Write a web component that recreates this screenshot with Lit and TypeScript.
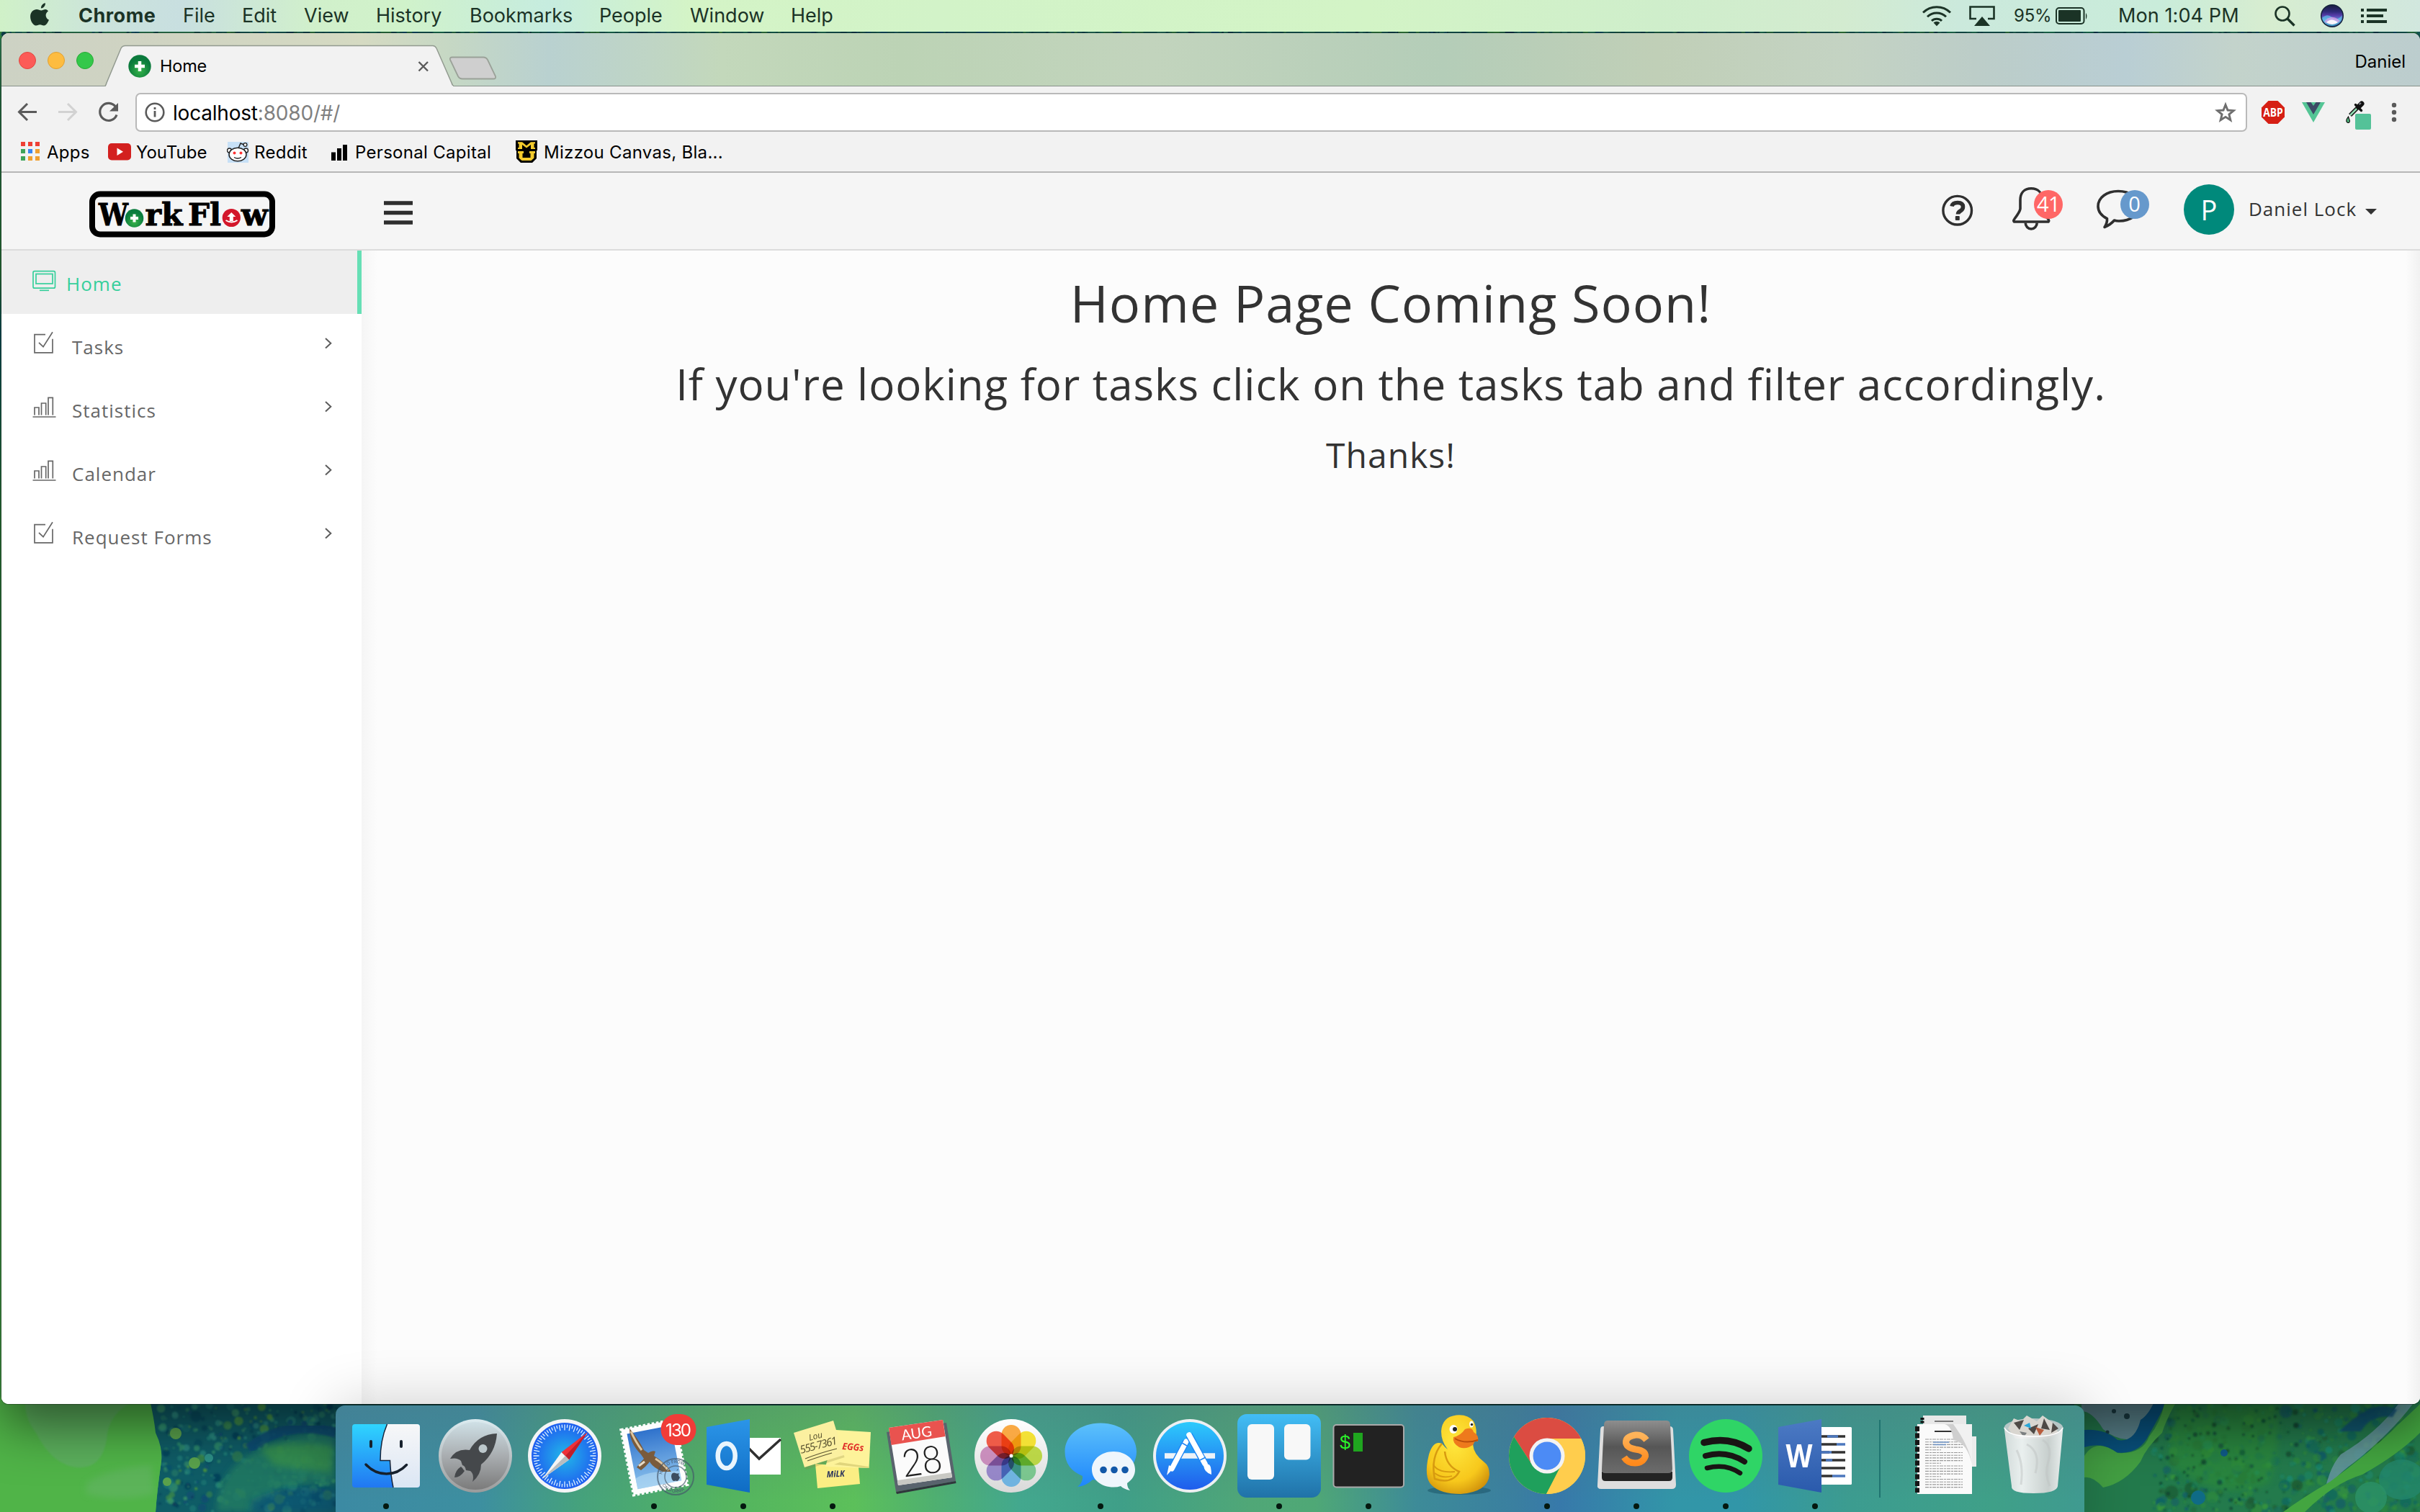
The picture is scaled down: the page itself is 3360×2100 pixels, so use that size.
import { LitElement, html, css, svg } from "lit";
import { customElement, property } from "lit/decorators.js";
import { classMap } from "lit/directives/class-map.js";

/* ---------- Wallpaper ---------- */

interface Blob { x: number; y: number; r: number; c: string; o: number; }

function scatter(seed: number, count: number, x0: number, x1: number, y0: number, y1: number, rMin: number, rMax: number, colors: string[]): Blob[] {
  let s = seed;
  const rnd = () => { s = (s * 16807) % 2147483647; return s / 2147483647; };
  return Array.from({ length: count }, () => ({
    x: x0 + rnd() * (x1 - x0),
    y: y0 + rnd() * (y1 - y0),
    r: rMin + rnd() * rnd() * (rMax - rMin),
    c: colors[Math.floor(rnd() * colors.length)],
    o: 0.35 + rnd() * 0.5,
  }));
}

const leftBubbles = scatter(7, 420, 222, 468, 1950, 2100, 1.5, 8, ["#2f8f6b", "#1f7f78", "#4f9a3c", "#0d4a72", "#2a8a80", "#083c58", "#3a9468"]);
const rightBubbles = scatter(31, 520, 2990, 3360, 1950, 2100, 1.5, 10, ["#1f7a4a", "#2f8a3c", "#146a60", "#3a9a3a", "#0d5a6a", "#1a8a70", "#1c5c34"]);
const darkSpecks = scatter(57, 90, 3000, 3200, 1955, 2100, 1.5, 5, ["#0d4a3c", "#0a4030", "#124a2c"]);
const topFlecks = scatter(91, 400, 0, 3360, 43, 48, 2, 9, ["#0d4a72", "#1f7f58", "#3b8a3c", "#06304a", "#2a7a60"]);

@customElement("desktop-wallpaper")
export class DesktopWallpaper extends LitElement {
  static styles = css`
    :host { display: block; width: 3360px; height: 2100px; }
    .wall { display: block; }
  `;
  render() {
    const dot = (b: Blob) => svg`<circle cx=${b.x} cy=${b.y} r=${b.r} fill=${b.c} opacity=${b.o}></circle>`;
    return html`
      <svg class="wall" width="3360" height="2100" viewBox="0 0 3360 2100">
        <defs>
          <linearGradient id="edge" x1="0" y1="0" x2="0" y2="1">
            <stop offset="0" stop-color="#2f7f58"></stop><stop offset=".18" stop-color="#2e8040"></stop>
            <stop offset=".22" stop-color="#0d5860"></stop><stop offset=".34" stop-color="#2f8040"></stop>
            <stop offset=".7" stop-color="#3f9a48"></stop><stop offset="1" stop-color="#4fb050"></stop>
          </linearGradient>
          <filter id="soft"><feGaussianBlur stdDeviation="5"></feGaussianBlur></filter>
          <filter id="soft1"><feGaussianBlur stdDeviation="1"></feGaussianBlur></filter>
        </defs>
        <rect width="3360" height="2100" fill="#155a55"></rect>
        <rect width="300" height="2100" fill="url(#edge)"></rect>
        ${topFlecks.map(dot)}
        <path d="M207 1940H480V2100H216Q218 2070 224 2030Q226 2010 214 1990Z" fill="#0f5c66"></path>
        <g filter="url(#soft1)">${leftBubbles.map(dot)}</g>
        <path d="M0 1940H207Q214 1970 216 1990Q226 2010 224 2030Q218 2070 216 2100H0Z" fill="#50b448"></path>
        <path d="M35 1945H190Q150 1960 148 2000Q140 2045 100 2037Q70 2030 50 1990Q34 1970 35 1945Z" fill="#5fae64" opacity=".75" filter="url(#soft1)"></path>
        <path d="M120 2060q30-20 90-25l4 40q-50 12-94 0Z" fill="#68b46a" opacity=".5" filter="url(#soft)"></path>
        <path d="M300 2100Q305 2030 370 2010Q420 1985 466 1990V2060Q380 2055 350 2100Z" fill="#227a62" opacity=".85" filter="url(#soft)"></path>
        <path d="M345 2012Q400 1970 466 1990" stroke="#0b4a74" stroke-width="14" fill="none" opacity=".8" filter="url(#soft1)"></path>
        <path d="M360 2010Q410 2000 462 2008L460 2045Q410 2040 380 2035Z" fill="#3f9a44" opacity=".6" filter="url(#soft)"></path>
        <path d="M350 2082Q400 2058 466 2070V2100H345Z" fill="#0d5478" opacity=".6" filter="url(#soft)"></path>
        <circle cx="244" cy="1991" r="8" fill="#5aa24c"></circle><circle cx="270" cy="2032" r="8" fill="#5aa24c"></circle>
        <circle cx="290" cy="2025" r="6" fill="#2d8f86"></circle><circle cx="232" cy="2058" r="6" fill="#5aa24c"></circle>

        <rect x="2880" y="1940" width="480" height="160" fill="#237a4c"></rect>
        <g filter="url(#soft1)">${rightBubbles.map(dot)}</g>
        <path d="M3020 1950H3160Q3170 2010 3150 2060Q3080 2090 3010 2030Z" fill="#2f8c38" opacity=".6" filter="url(#soft)"></path>
        <g filter="url(#soft1)">${darkSpecks.map(dot)}</g>
        <path d="M2890 1940H3010Q2990 1960 2978 1990Q2950 2010 2920 1985Q2905 1960 2890 1960Z" fill="#5a838c"></path>
        <circle cx="2935" cy="1960" r="3" fill="#1a3c44"></circle><circle cx="2953" cy="1967" r="4" fill="#1a3c44"></circle><circle cx="2926" cy="1989" r="2.500" fill="#1a3c44"></circle>
        <path d="M2994 1940Q2984 1965 2972 1972Q2964 2004 2940 2000Q2922 1984 2894 1986V2010Q2920 2002 2936 2017Q2970 2022 2984 1992Q3000 1965 3008 1945Z" fill="#08507c"></path>
        <path d="M3005 1950H3020Q3006 1975 3002 1990Q2980 2010 2972 2030Q2950 2060 2920 2066Q2906 2050 2894 2052V2022Q2910 1996 2940 2018Q2975 2020 2984 1995Q3000 1975 3005 1950Z" fill="#43a043"></path>
        <path d="M3225 2085Q3228 2060 3270 2030Q3320 1990 3350 1950H3330Q3300 1990 3250 2020Q3232 2040 3225 2085Z" fill="#6c98a4" opacity=".8"></path>
        <path d="M3170 2100Q3200 2078 3235 2058Q3300 2010 3330 1978Q3350 1960 3360 1950V1990Q3330 2020 3280 2048Q3240 2060 3200 2100Z" fill="#43a540"></path>
        <ellipse cx="3335" cy="2055" rx="32" ry="28" fill="#23876c" opacity=".8"></ellipse>
        <ellipse cx="3292" cy="2080" rx="22" ry="22" fill="#2c9268" opacity=".8"></ellipse>
        <path d="M3248 1988q20-20 40-30t40 0l-6 10q-30-4-44 20z" fill="#0a5078" opacity=".8" filter="url(#soft1)"></path>
        <circle cx="3052" cy="2080" r="10" fill="#0f6b86"></circle><circle cx="3088" cy="2018" r="5" fill="#0f5a86"></circle>
      </svg>`;
  }
}

/* ---------- macOS menu bar ---------- */

@customElement("mac-menu-bar")
export class MacMenuBar extends LitElement {
  static styles = css`
    :host { display: block; font-family: Inter, "Liberation Sans", sans-serif; }
    .bar {
      display: flex; align-items: center; height: 44px; box-sizing: border-box;
      background: linear-gradient(90deg, #d0f1c8 0, #cbe3dc 150px, #c8dfe0 250px, #d1f0cb 440px, #d0f2ca 560px, #c6ecdf 760px, #d4f4c6 960px, #d2f3c8 1300px, #d3f4c6 1900px, #cfeecb 2300px, #d3ebd0 2560px, #cbe9dc 2720px, #c9ecda 3000px, #d7edd0 3150px, #d1e7de 3360px);
      color: #1b3326; font-size: 27px; line-height: 44px;
    }
    .apple { margin-left: 41px; width: 68px; height: 44px; }
    .item { white-space: nowrap; letter-spacing: 0; }
    .app { font-weight: 700; letter-spacing: 0.5px; }
    .spacer { flex: 1; }
    .pct { font-size: 24px; width: 57px; letter-spacing: -0.2px; }
    .clock { width: 217px; letter-spacing: 0.1px; }
    .icon { display: block; flex: none; }
  `;
  private items: [string, number][] = [["File", 82], ["Edit", 86], ["View", 100], ["History", 130], ["Bookmarks", 180], ["People", 126], ["Window", 140], ["Help", 90]];
  render() {
    return html`<div class="bar">
      <svg class="apple" viewBox="43.500 0 68 44"><path fill="#1b3326" d="M59.500 11.500c-.3-3.500 2.600-7 5.900-7.300.4 3.800-2.800 7.200-5.900 7.300zM66 13c-3 0-4.200 1.400-6.200 1.400S56 13 53.400 13c-4.200 0-8.800 3.600-8.800 10.200 0 6.200 4.300 12.400 7.800 12.400 2 0 3-1.300 5.600-1.300s3.300 1.300 5.500 1.300c3.100 0 6-5 6.900-8-3-1.200-4.300-4-4.300-6.300 0-2.700 1.500-4.700 3.400-5.900C68 13.800 66.700 13 66 13z"/></svg>
      <span class="item app" style="width:145px">Chrome</span>
      ${this.items.map(([label, w]) => html`<span class="item" style="width:${w}px">${label}</span>`)}
      <span class="spacer"></span>
      <svg class="icon" width="127" height="44" viewBox="2669 0 127 44" fill="none" stroke="#1b3326" stroke-width="3">
        <path d="M2670 17.500a27 27 0 0 1 38 0M2676 23.300a18.500 18.500 0 0 1 26 0M2682 29a10 10 0 0 1 14 0"/>
        <path d="M2684.500 31.500a6.400 6.400 0 0 1 9 0l-4.500 4.800z" fill="#1b3326" stroke="none"/>
        <path d="M2744 26h-8.500V9.500h33V26h-8.500" stroke-width="2.600"/><path d="M2752 23l11 13h-22z" fill="#1b3326" stroke="none"/>
      </svg>
      <span class="item pct">95%</span>
      <svg class="icon" width="88" height="44" viewBox="2853 0 88 44"><rect x="2855" y="11" width="38.500" height="22" rx="4" fill="none" stroke="#1b3326" stroke-width="2"/><rect x="2858" y="14" width="31" height="16" rx="1" fill="#1b3326"/><path d="M2896 18q3 4 0 9z" fill="#1b3326"/></svg>
      <span class="item clock">Mon 1:04 PM</span>
      <svg class="icon" width="202" height="44" viewBox="3158 0 202 44">
        <defs>
          <linearGradient id="siri" x2="0" y2="1"><stop offset="0" stop-color="#1b1c44"/><stop offset=".3" stop-color="#2e2a78"/><stop offset=".5" stop-color="#5a3fae"/><stop offset=".7" stop-color="#5f8fd8"/><stop offset="1" stop-color="#2a4f8a"/></linearGradient>
        </defs>
        <circle cx="3169" cy="19" r="9.500" fill="none" stroke="#1b3326" stroke-width="2.600"/><path d="M3176 26l9.500 9.500" stroke="#1b3326" stroke-width="3.400"/>
        <circle cx="3238" cy="22" r="16" fill="#12213a"/><circle cx="3238" cy="22" r="14.500" fill="url(#siri)"/>
        <path d="M3224 25q7-7 14-1t14-3q-1 13-14 15-12-1-14-11z" fill="#5fe0f4" opacity=".55"/><path d="M3227 30q10-12 22-1-10 9-22 1z" fill="#ff9be8" opacity=".6"/><path d="M3230 31q7-7 16 0-8 6-16 0z" fill="#fff" opacity=".9"/>
        <path d="M3278 14h4M3286 14h28M3278 22h4M3286 22h23M3278 30h4M3286 30h28" stroke="#1b3326" stroke-width="4"/>
      </svg>
    </div>`;
  }
}

/* ---------- Browser chrome ---------- */

@customElement("browser-chrome")
export class BrowserChrome extends LitElement {
  static styles = css`
    :host { display: block; font-family: Inter, "Liberation Sans", sans-serif; color: #000; }
    .tabs {
      display: flex; height: 74px; position: relative;
      box-shadow: inset 0 -1px #87918a;
      background: linear-gradient(90deg, #cdd2c4 0, #d0d4c2 250px, #d5dac2 500px, #c6d8c4 620px, #b9d1d0 760px, #bfd5c5 900px, #c3d8bb 1000px, #bcd3b5 1250px, #c2d4bd 1600px, #b4cdb8 2000px, #c0cfb7 2300px, #c4d3c3 2560px, #bccdc8 2740px, #b9ced4 2950px, #c3d3cb 3100px, #bccdce 3358px);
    }
    .strip { display: block; flex: none; }
    .title { position: absolute; left: 220px; top: 30px; font-size: 23.5px; line-height: 32px; letter-spacing: -0.2px; }
    .profile { margin: 24px 20px 0 auto; font-size: 24px; line-height: 32px; letter-spacing: 0; }
    .tools { display: flex; align-items: center; height: 72px; background: #f2f2f2; }
    .nav { display: block; width: 186px; flex: none; }
    .omni { display: flex; align-items: center; box-sizing: border-box; width: 2932px; height: 54px; border: 2px solid #b9b9b9; border-radius: 7px; background: #fff; padding-left: 11px; font-size: 28px; }
    .url { margin: 2px 0 0 11px; letter-spacing: -0.2px; }
    .port { color: #808080; }
    .star { margin-left: auto; margin-right: 13px; }
    .marks { display: flex; align-items: center; height: 46px; background: #f2f2f2; border-bottom: 2px solid #b6b6b6; font-size: 24px; line-height: 30px; letter-spacing: 0.3px; }
    .mark { white-space: nowrap; margin-bottom: 6px; margin-left: -2px; margin-right: 2px; }
    svg { display: block; flex: none; }
  `;
  render() {
    const grid = ["#ee4035", "#ee4035", "#ee4035", "#3fa35a", "#3a86f0", "#f0a030", "#3fa35a", "#f0a030", "#f0a030"];
    return html`
      <div class="tabs">
        <svg class="strip" width="720" height="74" viewBox="2 46 720 74">
          <defs><radialGradient id="fav" cy=".7"><stop offset="0" stop-color="#35b44a"/><stop offset="1" stop-color="#0b7a3c"/></radialGradient></defs>
          <path d="M145 120.500Q147 119 148 115L168 67Q170 63.500 174 63.500H601Q604 63.500 606 67L627 115Q628 119 631 120.500Z" fill="#f2f2f2" stroke="#929a90" stroke-width="1.500"/>
          <path d="M147 120H629" stroke="#f2f2f2" stroke-width="2"/>
          <path d="M628 79.500H671Q675 79.500 677 83L688 106Q689 109.500 685 109.500H642Q638 109.500 636 106L625 83Q624 79.500 628 79.500Z" fill="#cfcfcf" stroke="#9aa198" stroke-width="1.800"/>
          <circle cx="38" cy="84" r="11.500" fill="#fc5b57" stroke="#e2463f"/><circle cx="78" cy="84" r="11.500" fill="#fdbc40" stroke="#e0a033"/><circle cx="118" cy="84" r="11.500" fill="#34c84a" stroke="#27aa35"/>
          <circle cx="194" cy="92" r="15.700" fill="url(#fav)"/><path d="M194 85v14M187 92h14" stroke="#fff" stroke-width="4.500"/>
          <path d="M581.500 86l12.500 12.500M594 86l-12.500 12.500" stroke="#5a5a5a" stroke-width="2.400"/>
        </svg>
        <span class="title">Home</span>
        <span class="profile">Daniel</span>
      </div>
      <div class="tools">
        <svg class="nav" width="186" height="72" viewBox="2 120 186 72" fill="none" stroke-width="3">
          <path d="M51 155.500H27M38 144L26.500 155.500 38 167" stroke="#5a5a5a"/>
          <path d="M81 155.500h24M94 144l11.500 11.500L94 167" stroke="#d2d2d2"/>
          <path d="M160.500 148.500a12 12 0 1 0 1.500 11" stroke="#5a5a5a" stroke-width="3.200"/><path d="M164 143v11.500h-12z" fill="#5a5a5a"/>
        </svg>
        <div class="omni">
          <svg width="28" height="28" viewBox="0 0 28 28"><circle cx="14" cy="14" r="12.300" fill="none" stroke="#5a5a5a" stroke-width="2.600"/><path d="M14 12v8.500M14 7v3" stroke="#5a5a5a" stroke-width="2.800"/></svg>
          <span class="url">localhost<span class="port">:8080/#/</span></span>
          <svg class="star" width="30" height="30" viewBox="0 0 30 30"><path d="M15 4.500l3 7.500 8.200.6-6.300 5.200 2 8-6.900-4.400-6.900 4.400 2-8-6.300-5.200 8.200-.6z" fill="none" stroke="#6e6e6e" stroke-width="2.900"/></svg>
        </div>
        <svg width="230" height="72" viewBox="3120 120 230 72">
          <path d="M3149.500 140h13l9.500 9.500v13l-9.500 9.500h-13l-9.500-9.500v-13z" fill="#d61f14"/>
          <text x="3156" y="161.500" text-anchor="middle" font-family="'Open Sans',sans-serif" font-weight="700" font-size="16" textLength="27.500" lengthAdjust="spacingAndGlyphs" fill="#fff">ABP</text>
          <path d="M3196 142h32l-16 28z" fill="#54c595"/><path d="M3202 142h6.500l3.500 5 3.500-5h6.500l-10 17z" fill="#3d4a66"/>
          <path d="M3263 160l13-13" stroke="#111" stroke-width="5.500"/><path d="M3263 160l9-9" stroke="#8fdcb0" stroke-width="2.500"/><path d="M3270.500 145.500l8 8" stroke="#111" stroke-width="3.400" stroke-linecap="round"/><path d="M3275.500 147.500l3.500-3.500" stroke="#111" stroke-width="7" stroke-linecap="round"/><path d="M3275.500 145l2.500-2" stroke="#8b8b95" stroke-width="2"/>
          <path d="M3260.500 162q-4.500 6-1.500 8 3 1.500 3.500-2z" fill="#4fb57c" stroke="#111" stroke-width="1.200"/>
          <rect x="3270" y="158" width="22" height="22" rx="2" fill="#54c298"/>
          <circle cx="3324" cy="146" r="3.200" fill="#5a5a5a"/><circle cx="3324" cy="156" r="3.200" fill="#5a5a5a"/><circle cx="3324" cy="166" r="3.200" fill="#5a5a5a"/>
        </svg>
      </div>
      <div class="marks">
        <svg width="65" height="46" viewBox="2 192 65 46">${grid.map((c, i) => svg`<rect x=${29 + (i % 3) * 10} y=${197 + Math.floor(i / 3) * 10} width="6" height="6" fill=${c}></rect>`)}</svg>
        <span class="mark" style="width:83px">Apps</span>
        <svg width="41" height="46" viewBox="150 192 41 46"><rect x="150" y="199" width="32" height="23.500" rx="5" fill="#d3201f"/><path d="M162.500 205.500v10.500l8.500-5.200z" fill="#fff"/></svg>
        <span class="mark" style="width:124px;letter-spacing:0">YouTube</span>
        <svg width="40" height="46" viewBox="315 192 40 46"><rect x="316" y="197" width="29" height="29" fill="#c7e0f6"/>
          <path d="M331 206l3-7 5 2" fill="none" stroke="#222" stroke-width="1.500"/><circle cx="340.500" cy="201" r="2.400" fill="#fff" stroke="#222" stroke-width="1.300"/>
          <circle cx="318.500" cy="209" r="3" fill="#fff" stroke="#222" stroke-width="1.400"/><circle cx="341.500" cy="209" r="3" fill="#fff" stroke="#222" stroke-width="1.400"/>
          <ellipse cx="330" cy="214.500" rx="12" ry="9.300" fill="#fff" stroke="#222" stroke-width="1.500"/><circle cx="325.500" cy="212.500" r="2" fill="#f33"/><circle cx="334.500" cy="212.500" r="2" fill="#f33"/><path d="M325 218.500q5 3 10 0" fill="none" stroke="#222" stroke-width="1.300"/></svg>
        <span class="mark" style="width:105px">Reddit</span>
        <svg width="35" height="46" viewBox="460 192 35 46"><path d="M460 211.500h6V223h-6zM468 206h6v17h-6zM476 201h6v22h-6z" fill="#000"/></svg>
        <span class="mark" style="width:221px">Personal Capital</span>
        <svg width="41" height="46" viewBox="716 192 41 46"><path d="M716 195h30v14h-1v11l-6 6h-16l-6-6v-11h-1z" fill="#000"/>
          <path d="M719 207v-2h1.500v-5.500H719v-2.300h6l6 5 6-5h6v2.300h-1.500v5.500h1.500v2h-6v-6l-6 4.500-6-4.500v6z" fill="#f3ca2c"/><path d="M719 210h8v3h-1.500v6h11v-6H735v-3h8v3h-1.500v6.500l-4 3.500h-13l-4-3.500V213H719z" fill="#f3ca2c"/></svg>
        <span class="mark">Mizzou Canvas, Bla...</span>
      </div>`;
  }
}

/* ---------- Web application ---------- */

@customElement("work-header")
export class WorkHeader extends LitElement {
  static styles = css`
    :host { display: block; font-family: "Open Sans", sans-serif; color: #333; }
    .head { display: flex; align-items: flex-start; height: 106px; background: #f5f5f5; border-bottom: 2px solid #dcdcdc; }
    svg { display: block; flex: none; }
    .logo { margin: 23px 0 0 121px; }
    .burger { margin: 39px 0 0 149px; }
    .actions { margin-left: auto; }
    .avatar { display: flex; align-items: center; justify-content: center; margin-top: 16px; width: 70px; height: 70px; border-radius: 50%; background: #00897b; color: #fff; font-size: 38px; }
    .user { margin: 31px 0 0 20px; font-size: 26px; line-height: 38px; letter-spacing: 1px; width: 162px; white-space: nowrap; }
    .caret { margin: 50px 60px 0 0; }
  `;
  render() {
    return html`<div class="head">
      <svg class="logo" width="261" height="68" viewBox="123 263 261 68">
        <defs><radialGradient id="g" cy=".7"><stop offset="0" stop-color="#3cb54a"/><stop offset="1" stop-color="#0a7d3e"/></radialGradient></defs>
        <rect x="128" y="269.500" width="250" height="56" rx="11" fill="#f5f5f5" stroke="#000" stroke-width="8"/>
        <g font-family="'DejaVu Serif',serif" font-weight="700" font-size="42" fill="#000" stroke="#000" stroke-width="1">
          <text x="137" y="313.300" textLength="41" lengthAdjust="spacingAndGlyphs">W</text>
          <text x="201.500" y="313.300" textLength="52" lengthAdjust="spacingAndGlyphs">rk</text>
          <text x="261" y="313.300" textLength="46" lengthAdjust="spacingAndGlyphs">Fl</text>
          <text x="335" y="313.300" textLength="37" lengthAdjust="spacingAndGlyphs">w</text>
        </g>
        <circle cx="186.500" cy="303" r="12.800" fill="url(#g)"/><path d="M186.500 297.500v11M181 303h11" stroke="#fff" stroke-width="4"/>
        <circle cx="321.300" cy="302.500" r="12.600" fill="#d3172b"/><path d="M321.300 295l6 6h-3.500v6h-5v-6h-3.500z" fill="#fff"/><path d="M313.500 306q8 5 16 0" stroke="#fff" stroke-width="2" fill="none"/>
      </svg>
      <svg class="burger" width="40" height="34" viewBox="0 0 40 34"><path d="M0 3h40M0 16.500h40M0 30h40" stroke="#2e2e2e" stroke-width="5.600"/></svg>
      <svg class="actions" width="346" height="100" viewBox="2686 240 346 100">
        <circle cx="2717.700" cy="292.200" r="19.800" fill="none" stroke="#2f2f2f" stroke-width="3.400"/>
        <path d="M2710 286.500q1-5 8-5 7.500 0 7.500 5.800 0 3.700-4 6-3 1.700-3 4.200" fill="none" stroke="#2f2f2f" stroke-width="5.600"/><rect x="2714.800" y="300" width="6" height="6" rx="1" fill="#2f2f2f"/>
        <path d="M2796.500 308q-1.500-1.500.5-4 7.500-10 8-14v-12c0-10 5.500-16.200 15.200-16.200S2835.500 268 2835.500 278v12q.5 4 8 14 2 2.500.5 4z" fill="none" stroke="#2f2f2f" stroke-width="3.600"/>
        <path d="M2812.200 309.500a8 8.500 0 0 0 16 0" fill="none" stroke="#2f2f2f" stroke-width="3.600"/>
        <circle cx="2844" cy="284" r="20" fill="#ff6766"/><text x="2844" y="294" text-anchor="middle" font-family="'Open Sans',sans-serif" font-size="29" fill="#fff" letter-spacing="-.5">41</text>
        <path d="M2941 265.500c-16 0-28 9-28 21 0 7.500 4.500 13 12.500 17.200q.5 6-3.500 11.800 8.500-3.500 13.500-9.500 3 1 6.500 1c16 0 28-8.500 28-20.500s-13-21-29-21z" fill="none" stroke="#2f2f2f" stroke-width="3.600" stroke-linejoin="round"/>
        <circle cx="2964" cy="284" r="20" fill="#6699cc"/><text x="2963.500" y="294" text-anchor="middle" font-family="'Open Sans',sans-serif" font-size="29" fill="#fff">0</text>
      </svg>
      <div class="avatar">P</div>
      <span class="user">Daniel Lock</span>
      <svg class="caret" width="16" height="8" viewBox="0 0 16 8"><path d="M0 0h16L8 8z" fill="#333"/></svg>
    </div>`;
  }
}

type NavIcon = "monitor" | "check" | "bars";

@customElement("nav-row")
export class NavRow extends LitElement {
  static styles = css`
    :host { display: block; font-family: "Open Sans", sans-serif; }
    .row { display: flex; align-items: flex-start; box-sizing: border-box; height: 88px; padding: 0 36px 0 42px; color: #676767; }
    .row.active { background: #eee; color: #36cf9b; border-right: 6px solid #66dfb5; }
    .icon { display: block; margin-top: 22px; flex: none; }
    .label { margin: 28px 0 0 20px; font-size: 26px; line-height: 36px; letter-spacing: 1px; white-space: nowrap; }
    .active .label { margin-left: 12px; }
    .chev { display: block; margin: 31px 4px 0 auto; flex: none; }
  `;
  @property() label = "";
  @property() icon: NavIcon = "check";
  @property({ type: Boolean }) active = false;
  private glyph() {
    if (this.icon === "monitor")
      return svg`<rect x="2" y="6.700" width="30.500" height="23.500" rx="2"></rect><rect x="6" y="10.500" width="23" height="13.500"></rect><path d="M11 33.300h13"></path>`;
    if (this.icon === "bars")
      return svg`<path d="M1.500 33h32M4 30.500V20h6v10.500M13.500 30.500V14h6.200v16.500M23 30.500V6.300h6.300v24.200"></path>`;
    return svg`<path d="M19 6.600H4v25.200h25V12.800M10 17.800l6 5.900L29 3.200"></path>`;
  }
  render() {
    return html`<div class=${classMap({ row: true, active: this.active })}>
      <svg class="icon" width="36" height="38" viewBox="0 0 36 38" fill="none" stroke="currentColor" stroke-width="1.700">${this.glyph()}</svg>
      <span class="label">${this.label}</span>
      ${this.active ? "" : html`<svg class="chev" width="12" height="18" viewBox="0 0 12 18" fill="none" stroke="#5c5c5c" stroke-width="2"><path d="M2 3l7.300 6.700L2 16.400"/></svg>`}
    </div>`;
  }
}

@customElement("work-page")
export class WorkPage extends LitElement {
  static styles = css`
    :host { display: block; font-family: "Open Sans", sans-serif; color: #333; }
    .body { display: flex; height: 1602px; background: #fcfcfc; }
    .side { width: 500px; background: #fff; flex: none; }
    .main { flex: 1; display: flex; flex-direction: column; align-items: center; white-space: nowrap;
      background: linear-gradient(90deg, #f5f5f5, #fcfcfc 22px, #fcfcfc 2838px, #f1f1f1); }
    .h1 { margin-top: 28px; font-size: 72px; line-height: 88px; letter-spacing: 1px; }
    .h2 { margin-top: 31px; font-size: 60px; line-height: 76px; letter-spacing: 0.95px; }
    .h3 { margin-top: 28px; font-size: 48px; line-height: 66px; letter-spacing: 1px; }
  `;
  render() {
    return html`
      <work-header></work-header>
      <div class="body">
        <nav class="side">
          <nav-row label="Home" icon="monitor" active></nav-row>
          <nav-row label="Tasks" icon="check"></nav-row>
          <nav-row label="Statistics" icon="bars"></nav-row>
          <nav-row label="Calendar" icon="bars"></nav-row>
          <nav-row label="Request Forms" icon="check"></nav-row>
        </nav>
        <main class="main">
          <div class="h1">Home Page Coming Soon!</div>
          <div class="h2">If you're looking for tasks click on the tasks tab and filter accordingly.</div>
          <div class="h3">Thanks!</div>
        </main>
      </div>`;
  }
}

/* ---------- Dock ---------- */

const ticks = Array.from({ length: 72 }, (_, i) => svg`<path d="M58 14.500v${i % 2 ? 4.500 : 8}" transform="rotate(${i * 5} 58 58)" stroke="#dff2ff" stroke-width="1.300"></path>`);
const petals = ["#f9a02f", "#f2de20", "#b5d334", "#6fc285", "#62aee0", "#8d7cc4", "#c483b6", "#ee4a35"];
const docLines = Array.from({ length: 19 }, (_, i) => svg`<path d="M31 ${35 + i * 3.700}h${i % 5 === 4 ? 22 : 52}" stroke="#999" stroke-width="1.100" stroke-dasharray="5 1 3 1"></path>`);

const art: Record<string, unknown> = {
  finder: svg`
    <defs><linearGradient id="fb" x2="0" y2="1"><stop stop-color="#2fd5ff"></stop><stop offset="1" stop-color="#2177f2"></stop></linearGradient>
    <linearGradient id="fw" x2="0" y2="1"><stop stop-color="#f7f7f8"></stop><stop offset="1" stop-color="#dbe6f4"></stop></linearGradient></defs>
    <rect x="11" y="14" width="94" height="88" rx="4" fill="url(#fb)"></rect>
    <path d="M59.500 14H101q4 0 4 4v80q0 4-4 4H68Q64.500 86 63.500 64.500H50Q50 36 59.500 14z" fill="url(#fw)"></path>
    <path d="M59.500 14Q50 36 50 64.500H63.500Q64.500 86 68 102" fill="none" stroke="#16243a" stroke-width="1.500"></path>
    <path d="M37 38v7M79 38v7" stroke="#16202c" stroke-width="4" stroke-linecap="round"></path>
    <path d="M30 70q12 13 28.500 13T86.500 70.500" fill="none" stroke="#16202c" stroke-width="3.400" stroke-linecap="round"></path>`,
  launchpad: svg`
    <defs><linearGradient id="lp" x2="0" y2="1"><stop stop-color="#cfe0e6"></stop><stop offset=".5" stop-color="#a9adb0"></stop><stop offset="1" stop-color="#7b7b7b"></stop></linearGradient>
    <linearGradient id="lr" x2="0" y2="1"><stop stop-color="#dcebf0"></stop><stop offset="1" stop-color="#9b9b9b"></stop></linearGradient></defs>
    <circle cx="58" cy="58" r="51" fill="url(#lr)"></circle><circle cx="58" cy="58" r="47" fill="url(#lp)"></circle>
    <path d="M88 27Q62 28 50 50Q32 47 23 62Q33 60 38 65L40 71Q44 72 45 78L51 79Q57 84 54 94Q66 84 66 70Q86 54 88 27z" fill="#45484b"></path>
    <path d="M38 73Q30 78 29 88Q37 88 43 79Q41 77 40 75z" fill="#45484b"></path><circle cx="68.500" cy="48" r="6" fill="#bcc7cb"></circle>`,
  safari: svg`
    <defs><radialGradient id="sf"><stop stop-color="#22b8e8"></stop><stop offset="1" stop-color="#1f5ff0"></stop></radialGradient></defs>
    <circle cx="58" cy="58" r="51" fill="#f4f5f6"></circle><circle cx="58" cy="58" r="46" fill="url(#sf)"></circle>${ticks}
    <path d="M90 25L53.500 53 64 63.500z" fill="#ee3038"></path><path d="M90 25L59 58l5 5.500z" fill="#c01f2a"></path><path d="M27 90L53.500 53 64 63.500z" fill="#f4f4f4"></path><path d="M27 90L59 58l5 5.500z" fill="#b9bdc0"></path>`,
  mail: svg`
    <defs><linearGradient id="ml" x2="0" y2="1"><stop stop-color="#2f72cc"></stop><stop offset="1" stop-color="#8fc5ee"></stop></linearGradient></defs>
    <g transform="rotate(-11 58 58)"><rect x="20" y="14" width="76" height="92" fill="#fdfdfd" stroke="#fdfdfd" stroke-width="4" stroke-dasharray="3.500 2.700"></rect><rect x="27" y="21" width="62" height="78" fill="url(#ml)"></rect>
    <path d="M27 84q20-8 62 2v13H27z" fill="#b6dbf4" opacity=".6"></path></g>
    <path d="M40 56Q24 40 24 20Q36 34 44 50L50 54Q56 50 60 52L58 58Q72 66 82 80L70 80Q56 74 52 66Q48 72 40 78L34 74Q40 66 44 62z" fill="#7a5b3c"></path><path d="M26 24q6 14 15 26M60 62q10 6 18 16" stroke="#dcc5a0" stroke-width="3" fill="none"></path><path d="M37 72l8-6" stroke="#e6dbc8" stroke-width="3"></path>
    <g fill="none" stroke="#44566a" opacity=".65"><circle cx="88" cy="87" r="25" stroke-width="2"></circle><circle cx="88" cy="87" r="15" stroke-width="1.500"></circle></g>
    <path id="arc" d="M69 87a19 19 0 0 1 38 0" fill="none"></path><path id="arc2" d="M66 87a22 22 0 0 0 44 0" fill="none"></path>
    <text font-family="Inter,sans-serif" font-size="6" fill="#44566a"><textPath href="#arc" startOffset="3">HELLO FROM</textPath></text><text font-family="Inter,sans-serif" font-size="6" fill="#44566a"><textPath href="#arc2" startOffset="12">CALIFORNIA</textPath></text>
    <path d="M89.500 79q0-2 2-3 0 2-2 3zM84 82q2-1 4 0t5 0q-2 3 1 6-2 5-4 5l-2-.5-2 .5q-3 0-4-6 0-4 2-5z" fill="#3c4d60"></path>
    <rect x="67.500" y="0" width="49" height="43" rx="21.500" fill="#f03c38"></rect><text x="92" y="30.500" text-anchor="middle" font-family="Inter,sans-serif" font-size="24" fill="#fff" textLength="36">130</text>`,
  outlook: svg`
    <defs><linearGradient id="ol" x2="0" y2="1"><stop stop-color="#2b95e8"></stop><stop offset="1" stop-color="#0f6cc4"></stop></linearGradient></defs>
    <rect x="60" y="33" width="50" height="51" fill="#fff"></rect><path d="M64 46l16 16 30-27" fill="none" stroke="#2f2f2f" stroke-width="3.500"></path>
    <path d="M7 18L67 7v102L7 98z" fill="url(#ol)"></path><ellipse cx="34.700" cy="58" rx="12" ry="17" fill="none" stroke="#e9f5fd" stroke-width="6.500"></ellipse>`,
  stickies: svg`
    <path d="M34 69l60 5 2 23-59 6z" fill="#fbee84"></path><path d="M63 22l48 3-2.500 50L48 73z" fill="#fdf39a"></path><path d="M60 70l48 5v-2l-40-6z" fill="#b5a850" opacity=".4"></path><path d="M4 26L59 9l14.600 48L19 74z" fill="#fbf0a0"></path><path d="M19 74l54.600-17 1 3-53 17z" fill="#8a8040" opacity=".25"></path>
    <g font-family="'Noto Sans',sans-serif" font-style="italic"><text x="26" y="37" font-size="12" fill="#5c5632" transform="rotate(-14 26 37)">Lou</text><text x="14" y="55" font-size="15" fill="#5c5632" textLength="53" transform="rotate(-15 14 55)">555-7361</text><text x="71" y="49" font-size="13" font-weight="700" fill="#e0302a" textLength="30" lengthAdjust="spacingAndGlyphs" transform="rotate(5 71 49)">EGGs</text><text x="50" y="88" font-size="12" font-weight="700" fill="#28325c" textLength="25" lengthAdjust="spacingAndGlyphs" transform="rotate(-3 50 88)">MiLK</text></g>
    <path d="M20 62q20-8 44-14M23 65q20-7 34-11" stroke="#5c5632" stroke-width="1.200" fill="none"></path>`,
  calendar: svg`
    <path d="M9 25L92 12l13 81-83 15z" fill="#59636d"></path><path d="M22 108l83-15 .5 3L23 111z" fill="#30363c"></path>
    <path d="M12 19L87 8l13 80-75 11z" fill="#fbfbfb"></path><path d="M24 92l75-11 1 7-75 11z" fill="#c9c9c4"></path><path d="M12 19L87 8l3.500 23L15.500 43z" fill="#e9534f"></path>
    <g font-family="Lato,Inter,sans-serif" text-anchor="middle" transform="rotate(-8 57 58)"><text x="55" y="33" font-size="20" fill="#fff">AUG</text><text x="57" y="84" font-size="53" font-weight="300" fill="#222" textLength="56" lengthAdjust="spacingAndGlyphs">28</text></g>`,
  photos: svg`
    <defs><linearGradient id="ph" x2="0" y2="1"><stop stop-color="#fff"></stop><stop offset="1" stop-color="#d9d9d9"></stop></linearGradient></defs>
    <circle cx="58" cy="58" r="51" fill="url(#ph)"></circle>
    <g class="petals">${petals.map((c, i) => svg`<rect class="petal" x="44.500" y="15" width="27" height="43" rx="13.500" fill=${c} opacity=".9" transform="rotate(${i * 45} 58 58)"></rect>`)}</g><circle cx="58" cy="58" r="2.500" fill="#fff"></circle>`,
  messages: svg`
    <defs><linearGradient id="ms" x2="0" y2="1"><stop stop-color="#5cc1fb"></stop><stop offset="1" stop-color="#1e86fb"></stop></linearGradient></defs>
    <path d="M58 12.500c28 0 50 17 50 39.500S86 92 58 92q-6 0-11-1-9 9-21 10 8-6 7-15Q8.500 76 8.500 52C8.500 29.500 30 12.500 58 12.500z" fill="url(#ms)"></path>
    <path d="M76 52c17 0 30 11 30 25 0 8-4 14-11 19q0 6 4 10-9-2-13-6-4 1.500-10 1.500c-17 0-30-10.500-30-24.500S59 52 76 52z" fill="#eff6fc"></path>
    <circle cx="62" cy="77.500" r="4.800" fill="#1258a8"></circle><circle cx="77" cy="77.500" r="4.800" fill="#1258a8"></circle><circle cx="92" cy="77.500" r="4.800" fill="#1258a8"></circle>`,
  appstore: svg`
    <defs><linearGradient id="as" x2="0" y2="1"><stop stop-color="#2dcafc"></stop><stop offset="1" stop-color="#1f5cec"></stop></linearGradient></defs>
    <circle cx="58" cy="58" r="51" fill="#eef0f2"></circle><circle cx="58" cy="58" r="47" fill="url(#as)"></circle>
    <path d="M23 58h70" stroke="#eef3f8" stroke-width="7.500"></path>
    <path d="M53 38L34 74" stroke="#1f86f4" stroke-width="10"></path><path d="M53 38L33 76" stroke="#fff" stroke-width="7" stroke-linecap="round"></path><path d="M29 71l6.500 4L26 85z" fill="#fff"></path>
    <path d="M57 29L81 73" stroke="#1f86f4" stroke-width="10"></path><path d="M57 29L79 69" stroke="#fff" stroke-width="7.500" stroke-linecap="round"></path><path d="M77 71q8-4 10 3 1 5 1 10-10-3-11-13z" fill="#fff"></path><path d="M72 64l8-4M47 40l7 4" stroke="#1f86f4" stroke-width="1.500"></path>`,
  trello: svg`
    <defs><linearGradient id="tr" x2="0" y2="1"><stop stop-color="#42bdf5"></stop><stop offset="1" stop-color="#2072a8"></stop></linearGradient></defs>
    <rect width="116" height="116" rx="13" fill="url(#tr)"></rect><rect x="14" y="14" width="37" height="77" rx="6" fill="#f8f8f8"></rect><rect x="65" y="14" width="36.500" height="49.500" rx="6" fill="#f8f8f8"></rect>`,
  terminal: svg`
    <rect x="9.500" y="15" width="97.500" height="86.500" rx="4" fill="#222" stroke="#a9a9a9" stroke-width="2"></rect>
    <text x="17.500" y="48" font-family="'Liberation Mono',monospace" font-size="27" fill="#2bf52b">$</text><rect x="37" y="26" width="13" height="26" fill="#1fa51f"></rect>`,
  duck: svg`
    <defs><radialGradient id="dk" cx=".45" cy=".35" r=".75"><stop stop-color="#ffe83e"></stop><stop offset=".65" stop-color="#f7c81c"></stop><stop offset="1" stop-color="#c98808"></stop></radialGradient></defs>
    <ellipse cx="60" cy="106" rx="44" ry="6" fill="#0a3a4a" opacity=".35"></ellipse>
    <path d="M36 41Q24 36 18 56Q10 88 22 99Q34 111 62 111Q100 108 102 84Q102 72 95 67Q80 56 79 42Q88 26 80 10Q72 0 56 1.500Q36 4 35 24Q35 38 44 49Q40 46 36 41z" fill="url(#dk)"></path>
    <path d="M36 41Q20 60 26 90Q50 98 60 80Q42 72 40 52" fill="none" stroke="#d79a10" stroke-width="2.500"></path><path d="M24 70q6 12 30 10M26 82q10 8 24 4" stroke="#d79a10" stroke-width="1.800" fill="none"></path>
    <path d="M52 32Q62 30 68 21Q78 17 80 25Q88 30 86 38Q80 37 80 42Q70 50 60 46Q50 40 52 32z" fill="#ee7a1c"></path><path d="M54 34q14 8 32 2" stroke="#b84c0a" stroke-width="2" fill="none"></path>
    <ellipse cx="52" cy="21" rx="5.500" ry="6" fill="#fff"></ellipse><circle cx="54" cy="21" r="3" fill="#222"></circle><ellipse cx="77" cy="14" rx="2.800" ry="4.500" fill="#fff"></ellipse><circle cx="77.500" cy="14.500" r="1.700" fill="#222"></circle>`,
  chrome: svg`
    <circle cx="58" cy="58" r="53" fill="#ffcd46"></circle>
    <path d="M58 34H105.300A53 53 0 0 0 12.100 31.500L37 70z" fill="#db4c42"></path>
    <path d="M12.100 31.500A53 53 0 0 0 57 111L79 70 37 70z" fill="#1fa05c"></path><path d="M78 70L57 111A53 53 0 0 0 105.300 34H58z" fill="#ffcd4d"></path>
    <circle cx="58" cy="58" r="24.500" fill="#f3f3f3"></circle><circle cx="58" cy="58" r="19.500" fill="#4c8bf5"></circle>`,
  sublime: svg`
    <defs><linearGradient id="su" x2="0" y2="1"><stop stop-color="#8e8e8e"></stop><stop offset=".5" stop-color="#565656"></stop><stop offset="1" stop-color="#6c6c6c"></stop></linearGradient><linearGradient id="ss" x2="0" y2="1"><stop stop-color="#ffb45a"></stop><stop offset="1" stop-color="#ff8a1c"></stop></linearGradient></defs>
    <path d="M12 17h92q5 0 5 5l4 76q0 6-6 6H9q-6 0-5-6l4-76q0-5 4-5z" fill="#dedede"></path><path d="M10 80h98v8q0 5-5 5H15q-5 0-5-5z" fill="#242424"></path>
    <path d="M18 9h82q5 0 5 6l3 61q0 6-6 6H15q-6 0-5-6l3-61q0-6 5-6z" fill="url(#su)"></path>
    <path d="M72 36Q66 28 57 29Q43 31 43.500 40Q45 47 57 49Q71 51 70.500 58.500Q67 68 56 68Q46 68 41 60" fill="none" stroke="url(#ss)" stroke-width="9"></path>`,
  spotify: svg`
    <circle cx="58" cy="58" r="51" fill="#2fd566"></circle>
    <g fill="none" stroke="#191414" stroke-linecap="round"><path d="M28 39.500q34-9 62 8.500" stroke-width="9.500"></path><path d="M30 58q29-8 54 8" stroke-width="8"></path><path d="M32 75q26-7 46 7" stroke-width="6.500"></path></g>`,
  word: svg`
    <defs><linearGradient id="wd" x2="0" y2="1"><stop stop-color="#4c7ac4"></stop><stop offset="1" stop-color="#2a5aac"></stop></linearGradient></defs>
    <rect x="60" y="18" width="49" height="80" rx="1.500" fill="#fff"></rect>
    <path d="M66 31h34M66 42h22M66 53h12M66 64h34M66 75h6M66 86h16" stroke="#333" stroke-width="3.600"></path><path d="M75 31h15M88 42h12M67 53h14M73 64h9M82 86h18" stroke="#4d78be" stroke-width="3.600"></path><path d="M81 53h19M72 75h28" stroke="#333" stroke-width="3.600"></path>
    <path d="M7 18L67 7v102L7 98z" fill="url(#wd)"></path><text x="36" y="74" text-anchor="middle" font-family="'Open Sans',sans-serif" font-weight="700" font-size="45" fill="#fff" textLength="37" lengthAdjust="spacingAndGlyphs">W</text>`,
  docs: svg`
    <rect x="28" y="2" width="60" height="100" fill="#e8e8e8"></rect><path d="M96 31h6v42h-6z" fill="#ececec"></path><path d="M44 10h26" stroke="#555" stroke-width="1.500"></path><path d="M27 5v8" stroke="#111" stroke-width="5" stroke-dasharray="3 1.500"></path>
    <rect x="20" y="14" width="76" height="97" fill="#fafafa"></rect><path d="M20 17v92" stroke="#161616" stroke-width="6" stroke-dasharray="7 2.500"></path>
    <path d="M44 24h26" stroke="#333" stroke-width="2"></path>${docLines}<path d="M42 39h22M42 42.500h18" stroke="#6d93c4" stroke-width="1.300"></path>
    <path d="M58 14q10 2 12 22 20 4 26 34V14z" fill="#f1f1f1"></path><path d="M58 14q10 2 12 22 20 4 26 34-4-26-26-56z" fill="#cfcfcf"></path>`,
  trash: svg`
    <defs><linearGradient id="ts"><stop stop-color="#d9dddd"></stop><stop offset=".3" stop-color="#f3f4f4"></stop><stop offset=".75" stop-color="#cfd2d1"></stop><stop offset="1" stop-color="#f2f3f3"></stop></linearGradient></defs>
    <ellipse cx="57.500" cy="19" rx="41" ry="13" fill="#b7c6c6"></ellipse>
    <path d="M22 20l8-14 10 4 8-8 14 8 8-8 14 10 8 14-14 8H32z" fill="#d9d6d0"></path><path d="M30 12l8 10 6-14zM50 20l8 8 6-14zM72 6l-4 14 12 2zM84 12l8 8-10 6z" fill="#4f4a46"></path><path d="M44 16l8-4 2 8z" fill="#2aa7d8"></path><path d="M60 18l12 4-6 8z" fill="#b85c3c"></path><path d="M38 24l10 2-4 6z" fill="#7b7f80"></path>
    <path d="M16.500 18Q20 30 57.500 30T98.500 18L91 100Q90 110 57.500 110T27 100z" fill="url(#ts)" opacity=".95"></path>
    <path d="M17 19Q22 31 57.500 31T98 19" fill="none" stroke="#fff" stroke-width="1.500"></path><path d="M34 50q10 20 6 48M70 36q14 8 8 30-6 16 2 34M48 42q20 10 12 40" stroke="#bfc4c3" stroke-width="3" fill="none" opacity=".5"></path>`,
};

@customElement("mac-dock")
export class MacDock extends LitElement {
  static styles = css`
    :host { display: block; }
    .dock {
      display: flex; gap: 8px; box-sizing: border-box; width: 2428px; height: 148px; padding: 12px 12px 0;
      border-radius: 13px 13px 0 0; overflow: hidden;
      background:
        linear-gradient(180deg, rgba(80, 110, 120, .3), rgba(80, 110, 120, 0) 90%),
        linear-gradient(90deg, #3c8aa3 0, #3d8fa0 200px, #45a27c 340px, #53b45f 540px, #5cc05a 720px, #4fb070 830px, #43a88e 950px, #3f9f88 1090px, #50a777 1270px, #4fa876 1360px, #3d8b98 1500px, #3a7fa0 1640px, #3779aa 1700px, #3296a8 1860px, #3196a8 1950px, #3c9c90 2100px, #3fa088 2300px, #3f9a90 2428px);
    }
    .app { display: flex; flex-direction: column; align-items: center; width: 116px; flex: none; }
    .art { display: block; overflow: visible; }
    .petal { mix-blend-mode: multiply; }
    .petals { isolation: isolate; }
    .run { width: 8px; height: 8px; margin-top: 8px; border-radius: 50%; background: #04180f; }
    .gap { width: 48px; display: flex; justify-content: center; }
    .line { width: 2px; height: 108px; margin-top: 8px; background: #1f7470; }
  `;
  private apps: [string, boolean][] = [
    ["finder", true], ["launchpad", false], ["safari", false], ["mail", true], ["outlook", true], ["stickies", true],
    ["calendar", false], ["photos", false], ["messages", true], ["appstore", false], ["trello", true], ["terminal", true],
    ["duck", false], ["chrome", true], ["sublime", true], ["spotify", true], ["word", true],
  ];
  private tile(name: string, running: boolean) {
    return html`<div class="app"><svg class="art" width="116" height="116" viewBox="0 0 116 116">${art[name]}</svg>${running ? html`<span class="run"></span>` : ""}</div>`;
  }
  render() {
    return html`<div class="dock">
      ${this.apps.map(([n, r]) => this.tile(n, r))}
      <div class="gap"><span class="line"></span></div>
      ${this.tile("docs", false)}${this.tile("trash", false)}
    </div>`;
  }
}

/* ---------- Desktop ---------- */

@customElement("app-root")
export class AppRoot extends LitElement {
  static styles = css`
    :host { display: block; width: 3360px; height: 2100px; position: relative; overflow: hidden; }
    .wall { position: absolute; inset: 0; }
    .menu { position: relative; }
    .window { position: absolute; left: 2px; top: 46px; width: 3358px; height: 1904px; border-radius: 10px; overflow: hidden; background: #fcfcfc; }
    .shade { position: absolute; left: 2px; top: 46px; width: 3358px; height: 1904px; border-radius: 10px; box-shadow: 0 0 0 1px rgba(0, 0, 0, .3), 0 30px 70px rgba(0, 0, 0, .5); }
    .glow { position: absolute; left: 466px; top: 1952px; width: 2428px; height: 200px; box-shadow: 0 0 80px rgba(0, 0, 0, .2); }
    .dock { position: absolute; left: 466px; bottom: 0; }
  `;
  render() {
    return html`
      <desktop-wallpaper class="wall"></desktop-wallpaper>
      <div class="shade"></div>
      <mac-menu-bar class="menu"></mac-menu-bar>
      <div class="window">
        <browser-chrome></browser-chrome>
        <work-page></work-page>
      </div>
      <div class="glow"></div>
      <mac-dock class="dock"></mac-dock>`;
  }
}
